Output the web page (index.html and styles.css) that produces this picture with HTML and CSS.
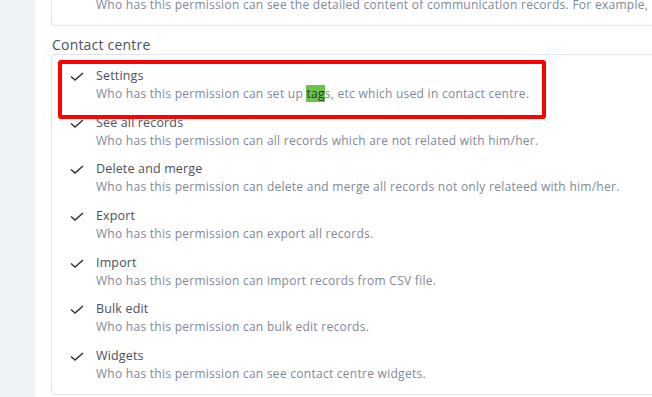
FILE: index.html
```html
<!DOCTYPE html>
<html>
<head>
<meta charset="utf-8">
<link rel="stylesheet" href="styles.css">
</head>
<body>
<div class="layout">
  <aside class="side"></aside>
  <main class="main">
    <section class="card card-top">
      <div class="row row-cut">
        <span class="check"></span>
        <div class="text">
          <div class="desc">Who has this permission can see the detailed content of communication records. For example, l</div>
        </div>
      </div>
    </section>
    <h3 class="group">Contact centre</h3>
    <section class="card card-main">
      <div class="row">
        <svg class="check" viewBox="0 0 14 9" width="14" height="9"><polyline points="1,4.5 5,8 13,1" /></svg>
        <div class="text">
          <div class="title">Settings</div>
          <div class="desc">Who has this permission can set up <mark class="hl">tag</mark>s, etc which used in contact centre.</div>
        </div>
      </div>
      <div class="row">
        <svg class="check" viewBox="0 0 14 9" width="14" height="9"><polyline points="1,4.5 5,8 13,1" /></svg>
        <div class="text">
          <div class="title">See all records</div>
          <div class="desc">Who has this permission can all records which are not related with him/her.</div>
        </div>
      </div>
      <div class="row">
        <svg class="check" viewBox="0 0 14 9" width="14" height="9"><polyline points="1,4.5 5,8 13,1" /></svg>
        <div class="text">
          <div class="title">Delete and merge</div>
          <div class="desc">Who has this permission can delete and merge all records not only relateed with him/her.</div>
        </div>
      </div>
      <div class="row">
        <svg class="check" viewBox="0 0 14 9" width="14" height="9"><polyline points="1,4.5 5,8 13,1" /></svg>
        <div class="text">
          <div class="title">Export</div>
          <div class="desc">Who has this permission can export all records.</div>
        </div>
      </div>
      <div class="row">
        <svg class="check" viewBox="0 0 14 9" width="14" height="9"><polyline points="1,4.5 5,8 13,1" /></svg>
        <div class="text">
          <div class="title">Import</div>
          <div class="desc">Who has this permission can import records from CSV file.</div>
        </div>
      </div>
      <div class="row">
        <svg class="check" viewBox="0 0 14 9" width="14" height="9"><polyline points="1,4.5 5,8 13,1" /></svg>
        <div class="text">
          <div class="title">Bulk edit</div>
          <div class="desc">Who has this permission can bulk edit records.</div>
        </div>
      </div>
      <div class="row">
        <svg class="check" viewBox="0 0 14 9" width="14" height="9"><polyline points="1,4.5 5,8 13,1" /></svg>
        <div class="text">
          <div class="title">Widgets</div>
          <div class="desc">Who has this permission can see contact centre widgets.</div>
        </div>
      </div>
      <div class="annot"></div>
    </section>
  </main>
</div>
</body>
</html>
```

FILE: styles.css
```css
* { box-sizing: border-box; }
html, body { margin: 0; padding: 0; background: #fff; }
body {
  font-family: "Open Sans", "Liberation Sans", sans-serif;
  width: 652px;
  height: 397px;
  overflow: hidden;
}
.layout {
  display: flex;
  height: 397px;
}
.side {
  width: 35px;
  flex: none;
  background: #eef2f7;
}
.main {
  flex: 1;
  padding-left: 16px;
  min-width: 0;
}
.card {
  border: 1px solid #dfe3ea;
  border-radius: 4px;
  background: #fff;
  margin-right: -20px;
}
.card-top {
  border-top: none;
  border-top-left-radius: 0;
  border-top-right-radius: 0;
  height: 26px;
  overflow: hidden;
}
.row {
  display: flex;
  align-items: flex-start;
  padding-left: 18px;
}
.row-cut {
  margin-top: -4px;
}
.check {
  flex: none;
  width: 14px;
  height: 9px;
  margin-top: 5px;
  margin-right: 12px;
  fill: none;
  stroke: #2f3338;
  stroke-width: 1.5;
}
span.check { height: 1px; }
.text {
  min-width: 0;
  white-space: nowrap;
}
.title {
  font-size: 12.5px;
  line-height: 18px;
  letter-spacing: 0.15px;
  color: #4b5160;
}
.desc {
  font-size: 12px;
  line-height: 18px;
  letter-spacing: 0.27px;
  color: #808898;
}
.hl {
  background: #6cc24a;
  color: #2a3a2a;
  padding: 0;
}
.group {
  margin: 0;
  padding: 10px 0 0 1px;
  height: 28px;
  font-size: 14px;
  line-height: 18px;
  letter-spacing: 0.2px;
  font-weight: 400;
  color: #4d525c;
}
.card-main {
  position: relative;
  height: 341px;
  padding-top: 12px;
  display: flex;
  flex-direction: column;
  gap: 10.67px;
}
.annot {
  position: absolute;
  left: 6px;
  top: 5px;
  width: 488px;
  height: 59px;
  border: 4px solid #ff0000;
  border-radius: 3px;
}
```
